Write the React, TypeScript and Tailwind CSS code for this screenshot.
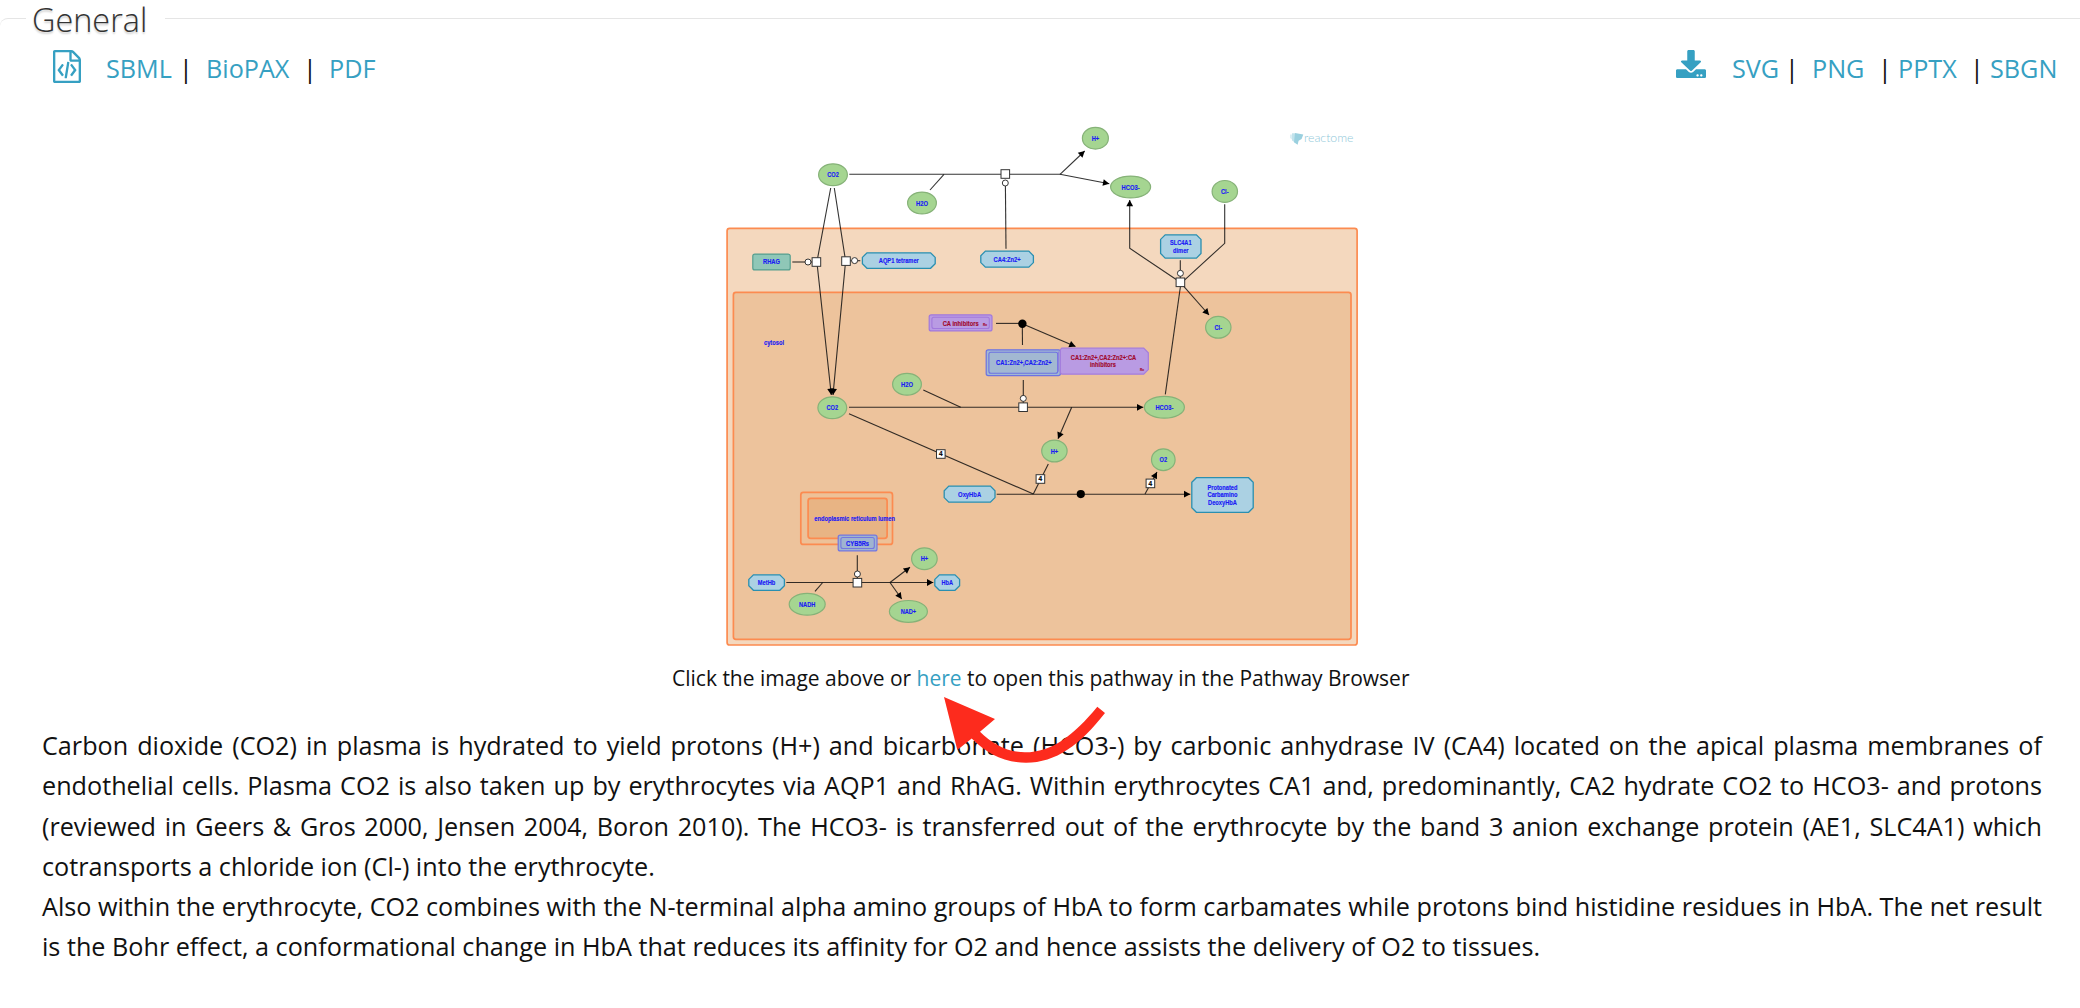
import React from 'react';

const INK = '#111111';
const BLUE = '#1a1af5';

type Pt = [number, number];

function Label({ x, y, w, children, fill = BLUE, size = 6.5 }: { x: number; y: number; w?: number; children: string; fill?: string; size?: number }) {
  return (
    <text
      x={x}
      y={y + size * 0.35}
      textAnchor="middle"
      fontSize={size}
      fontWeight={700}
      fill={fill}
      stroke={fill}
      strokeWidth={0.15}
      textLength={w}
      lengthAdjust="spacingAndGlyphs"
      fontFamily="'Liberation Sans', Arial, sans-serif"
    >
      {children}
    </text>
  );
}

function Molecule({ x, y, rx = 14.4, label, w }: { x: number; y: number; rx?: number; label: string; w: number }) {
  return (
    <g>
      <ellipse cx={x} cy={y} rx={rx} ry={10.9} fill="#a5d591" stroke="#86b278" strokeWidth={1.2} />
      <Label x={x} y={y + 0.3} w={w}>{label}</Label>
    </g>
  );
}

function octagon(x: number, y: number, w: number, h: number, c: number, cl = c) {
  return `M${x + cl} ${y}H${x + w - c}L${x + w} ${y + c}V${y + h - c}L${x + w - c} ${y + h}H${x + cl}L${x} ${y + h - cl}V${y + cl}Z`;
}

function Complex({ x, y, w, h, lines, tw }: { x: number; y: number; w: number; h: number; lines: string[]; tw: number[] }) {
  return (
    <g>
      <path d={octagon(x + 0.6, y + 0.6, w - 1.2, h - 1.2, 4.6)} fill="#abd1e3" stroke="#2a8fb0" strokeWidth={1.3} />
      {lines.map((t, i) => (
        <Label key={t} x={x + w / 2} y={y + h / 2 + 0.2 + (i - (lines.length - 1) / 2) * 7.2} w={tw[i]}>
          {t}
        </Label>
      ))}
    </g>
  );
}

function Node({ x, y, n }: { x: number; y: number; n?: string }) {
  return (
    <g>
      <rect x={x - 4.3} y={y - 4.3} width={8.6} height={8.6} fill="#fff" stroke="#333" strokeWidth={1} />
      {n && <Label x={x} y={y} fill="#000" size={6.5}>{n}</Label>}
    </g>
  );
}

function Catalyst({ x, y }: { x: number; y: number }) {
  return <circle cx={x} cy={y} r={3} fill="#fff" stroke="#222" strokeWidth={0.9} />;
}

function Line({ pts, arrow }: { pts: Pt[]; arrow?: boolean }) {
  const [tx, ty] = pts[pts.length - 1];
  const [px, py] = pts[pts.length - 2];
  const a = (Math.atan2(ty - py, tx - px) * 180) / Math.PI;
  return (
    <g>
      <polyline points={pts.map((p) => p.join(',')).join(' ')} fill="none" stroke={INK} strokeOpacity={0.85} strokeWidth={1.1} />
      {arrow && <path d="M0 0L-6.3 -3.4V3.4Z" fill="#000" transform={`translate(${tx} ${ty}) rotate(${a})`} />}
    </g>
  );
}

function Compartment({ x, y, w, h, fill }: { x: number; y: number; w: number; h: number; fill: string }) {
  return <rect x={x} y={y} width={w} height={h} rx={2.5} fill={fill} stroke="#fc8b50" strokeWidth={1.7} />;
}

function EntitySet({ x, y, w, h, fill, stroke }: { x: number; y: number; w: number; h: number; fill: string; stroke: string }) {
  return (
    <g fill={fill} stroke={stroke}>
      <rect x={x + 0.6} y={y + 0.6} width={w - 1.2} height={h - 1.2} rx={2} strokeWidth={1.2} />
      <rect x={x + 3.3} y={y + 3} width={w - 6.6} height={h - 6} rx={2} strokeWidth={1.1} />
    </g>
  );
}

function Pathway() {
  return (
    <svg className="block h-[540px] w-[640px]" viewBox="720 110 640 540" role="img" aria-label="Pathway diagram">
      <Compartment x={727.1} y={228.3} w={630} h={416.7} fill="#f4d8be" />
      <Compartment x={733.4} y={292.4} w={617.6} h={346.9} fill="#edc39c" />
      <Compartment x={800.8} y={492.4} w={91.7} h={52} fill="#edc198" />
      <Compartment x={808.1} y={498.4} w={79} h={39.9} fill="#e8b484" />

      <Line pts={[[849.3, 174.3], [1060, 174.3]]} />
      <Line pts={[[944, 174.3], [930, 190]]} />
      <Line pts={[[1060, 174.3], [1084.7, 151]]} arrow />
      <Line pts={[[1060, 174.3], [1109.3, 183.7]]} arrow />
      <Line pts={[[1005.4, 185], [1006, 248.7]]} />
      <Line pts={[[830.7, 188], [816.9, 262], [831.3, 395]]} arrow />
      <Line pts={[[834.3, 188], [845.6, 261], [833, 395]]} arrow />
      <Line pts={[[792.3, 262], [812, 262]]} />
      <Line pts={[[850, 260.7], [860.3, 260.7]]} />
      <Line pts={[[1180.3, 282.3], [1129.7, 248.3], [1129.7, 200]]} arrow />
      <Line pts={[[1224.7, 204.3], [1224.7, 243.3], [1182, 282.3]]} />
      <Line pts={[[1180.3, 260.3], [1180.3, 280]]} />
      <Line pts={[[1180.5, 286], [1165.3, 394.3]]} />
      <Line pts={[[1182, 284.3], [1209, 315]]} arrow />
      <Line pts={[[996, 323.4], [1022.3, 323.4]]} />
      <Line pts={[[1022.3, 323.7], [1022.5, 345]]} />
      <Line pts={[[1022.3, 323.7], [1075.5, 346.5]]} arrow />
      <Line pts={[[1023.3, 380], [1023.3, 405]]} />
      <Line pts={[[923.3, 390], [960.7, 407.3]]} />
      <Line pts={[[849, 407.3], [1143.3, 407.3]]} arrow />
      <Line pts={[[849, 413.7], [1033.3, 494]]} />
      <Line pts={[[1071.7, 407.3], [1058, 438.7]]} arrow />
      <Line pts={[[1048.3, 464], [1033.3, 494]]} />
      <Line pts={[[996.7, 494.2], [1190.3, 494.2]]} arrow />
      <Line pts={[[1145, 494], [1157, 472]]} arrow />
      <Line pts={[[857.3, 555.3], [857.3, 580]]} />
      <Line pts={[[786.3, 582.5], [933.3, 582.5]]} arrow />
      <Line pts={[[822.7, 582.5], [815, 591.3]]} />
      <Line pts={[[890, 582.5], [910, 567.3]]} arrow />
      <Line pts={[[890, 582.5], [901.7, 599]]} arrow />

      <Node x={1005.3} y={174} />
      <Catalyst x={1005.3} y={183} />
      <Node x={816.4} y={262} />
      <Catalyst x={808} y={262} />
      <Node x={846} y={261.1} />
      <Catalyst x={854.6} y={260.6} />
      <Node x={1180.4} y={282.3} />
      <Catalyst x={1180.4} y={273.3} />
      <Node x={1023.1} y={407.2} />
      <Catalyst x={1023.3} y={398.4} />
      <Node x={857.4} y={582.7} />
      <Catalyst x={857.4} y={574} />
      <Node x={940.8} y={454} n="4" />
      <Node x={1040.4} y={479} n="4" />
      <Node x={1150.4} y={483.4} n="4" />
      <circle cx={1022.4} cy={323.8} r={4.2} fill="#000" />
      <circle cx={1080.8} cy={494.1} r={4.1} fill="#000" />

      <Molecule x={833} y={174.7} label="CO2" w={11.5} />
      <Molecule x={922} y={203} label="H2O" w={12} />
      <Molecule x={1095.4} y={138.2} rx={13} label="H+" w={7.5} />
      <Molecule x={1130.6} y={187} rx={20} label="HCO3-" w={18} />
      <Molecule x={1224.8} y={191.4} rx={12.7} label="Cl-" w={7.5} />
      <Molecule x={1218.3} y={327.3} rx={12.7} label="Cl-" w={7.5} />
      <Molecule x={907} y={384.3} label="H2O" w={12} />
      <Molecule x={832.3} y={407.7} label="CO2" w={11.5} />
      <Molecule x={1164.4} y={407.3} rx={20} label="HCO3-" w={18} />
      <Molecule x={1054.4} y={451} rx={12.7} label="H+" w={7.5} />
      <Molecule x={1163.3} y={459.7} rx={11.8} label="O2" w={7.5} />
      <Molecule x={924.4} y={558.7} rx={12.8} label="H+" w={7.5} />
      <Molecule x={807.2} y={604.3} rx={18} label="NADH" w={16.5} />
      <Molecule x={908.4} y={611.4} rx={19} label="NAD+" w={15.5} />

      <rect x={752.8} y={254.1} width={37.4} height={15.8} rx={2} fill="#8fc7b7" stroke="#559e8e" strokeWidth={1.2} />
      <Label x={771.5} y={262.2} w={17}>RHAG</Label>
      <Complex x={861.8} y={252.2} w={74} h={16.7} lines={['AQP1 tetramer']} tw={[40]} />
      <Complex x={980.2} y={250.5} w={53.8} h={17.3} lines={['CA4:Zn2+']} tw={[27]} />
      <Complex x={1160} y={234.2} w={41.6} h={24.5} lines={['SLC4A1', 'dimer']} tw={[21.5, 15.5]} />
      <Complex x={943.6} y={485.5} w={52} h={17.3} lines={['OxyHbA']} tw={[23]} />
      <Complex x={1191.2} y={477.1} w={62.6} h={35.8} lines={['Protonated', 'Carbamino', 'DeoxyHbA']} tw={[30, 30, 29]} />
      <Complex x={748.2} y={574.2} w={36.8} h={16.7} lines={['MetHb']} tw={[17.5]} />
      <Complex x={934.2} y={574.2} w={26} h={16.7} lines={['HbA']} tw={[11.5]} />

      <EntitySet x={928.6} y={314.2} w={64} h={17.3} fill="#b99be3" stroke="#a279dc" />
      <Label x={960.7} y={323.4} w={36} fill="#a0082c">CA inhibitors</Label>
      <Label x={985} y={324.4} w={4} fill="#a0082c" size={3.5}>Rx</Label>
      <EntitySet x={985.6} y={349.2} w={75.4} h={27} fill="#a2b8d2" stroke="#6c72e2" />
      <Label x={1023.8} y={362.7} w={55.5}>CA1:Zn2+,CA2:Zn2+</Label>
      <path d={octagon(1060.3, 348.2, 88, 26, 4.6, 1.5)} fill="#b99be3" stroke="#a57ddd" strokeWidth={1.2} />
      <path d="M1058.3 351.5V371.5" stroke="#8f76e0" strokeWidth={1} />
      <Label x={1103.5} y={357.7} w={65.5} fill="#a0082c">CA1:Zn2+,CA2:Zn2+:CA</Label>
      <Label x={1103} y={365} w={26} fill="#a0082c">inhibitors</Label>
      <Label x={1142} y={369.4} w={4} fill="#a0082c" size={3.5}>Rx</Label>
      <EntitySet x={837.6} y={534.5} w={40} h={17} fill="#9fb4d0" stroke="#7477e0" />
      <Label x={857.6} y={543.3} w={23}>CYB5Rs</Label>

      <Label x={774} y={342.7} w={20}>cytosol</Label>
      <Label x={854.7} y={519} w={80.7}>endoplasmic reticulum lumen</Label>

      <g fill="#9ad0df">
        <path d="M1295 133L1303.3 134.6L1301.6 139L1298.6 140.7L1297.6 144.8L1294 142.2Z" />
        <path d="M1292 133.2H1295V142.4L1292 140.6Z" opacity={0.6} />
        <path d="M1290 134.5H1292V139.4L1290 138Z" opacity={0.35} />
      </g>
      <text x={1304} y={142.3} fontSize={12.5} fontWeight={300} fontFamily="Lato, sans-serif" fill="#90c8d9" textLength={49.5} lengthAdjust="spacingAndGlyphs">
        reactome
      </text>
    </svg>
  );
}

function FileCodeIcon() {
  return (
    <svg className="h-[33px] w-7 fill-[#36a0c2]" viewBox="0 0 1536 1792" preserveAspectRatio="none" aria-hidden="true">
      <path d="M1468 380q28 28 48 76t20 88v1152q0 40-28 68t-68 28H96q-40 0-68-28t-28-68V96q0-40 28-68T96 0h896q40 0 88 20t76 48zm-444-244v376h376q-10-29-22-41l-313-313q-12-12-41-22zm384 1528V640H992q-40 0-68-28t-28-68V128H128v1536h1280zM480 768q8-11 21-12.5t24 6.5l51 38q11 8 12.5 21t-6.5 24l-182 243 182 243q8 11 6.5 24t-12.5 21l-51 38q-11 8-24 6.5t-21-12.5l-226-301q-14-19 0-38zm802 301q14 19 0 38l-226 301q-8 11-21 12.5t-24-6.5l-51-38q-11-8-12.5-21t6.5-24l182-243-182-243q-8-11-6.5-24t12.5-21l51-38q11-8 24-6.5t21 12.5zm-620 461q-13-2-20.5-13t-5.5-24l138-831q2-13 13-20.5t24-5.5l63 10q13 2 20.5 13t5.5 24l-138 831q-2 13-13 20.5t-24 5.5z" />
    </svg>
  );
}

function DownloadIcon() {
  return (
    <svg className="h-7 w-[30px] fill-[#36a0c2]" viewBox="0 0 512 512" preserveAspectRatio="none" aria-hidden="true">
      <path d="M216 0h80c13.3 0 24 10.7 24 24v168h87.700c17.800 0 26.700 21.500 14.100 34.100L269.700 378.300c-7.500 7.500-19.800 7.500-27.300 0L90.100 226.100c-12.600-12.600-3.700-34.100 14.100-34.100H192V24c0-13.300 10.700-24 24-24zm296 376v112c0 13.300-10.700 24-24 24H24c-13.300 0-24-10.700-24-24V376c0-13.300 10.700-24 24-24h146.700l49 49c20.100 20.100 52.500 20.100 72.600 0l49-49H488c13.300 0 24 10.700 24 24zm-124 88c0-11-9-20-20-20s-20 9-20 20 9 20 20 20 20-9 20-20zm64 0c0-11-9-20-20-20s-20 9-20 20 9 20 20 20 20-9 20-20z" />
    </svg>
  );
}

const link = 'text-[#36a0c2]';

function RedArrow() {
  return (
    <svg className="pointer-events-none absolute top-[696px] left-[942px] h-[70px] w-[166px]" viewBox="942 696 166 70" aria-hidden="true">
      <path
        d="M944 697L995 719L980 731.7C992 744 1008 752.3 1025 752.3C1052 752.3 1074 735 1097.300 706.700L1105 713C1080 745 1056 762.700 1026 762.700C1004 762.700 986 753 971.700 738.500L957.300 750Z"
        fill="#fd2b1d"
      />
    </svg>
  );
}

export default function App() {
  return (
    <main className="relative h-[1008px] w-[2080px] overflow-hidden bg-white font-['Open_Sans',sans-serif] text-[#111]">
      <header className="flex h-[38px] items-start">
        <div className="mt-[18px] h-2 w-[26px] rounded-tl-lg border-t border-[#e5e5e5]" />
        <h1 className="w-[139px] pl-[6px] text-[32.4px] leading-[38px] font-light whitespace-nowrap text-[#333] [text-shadow:0_2px_2px_rgba(0,0,0,0.2)]">General</h1>
        <div className="mt-[18px] flex-1 border-t border-[#e5e5e5]" />
      </header>

      <nav className="flex h-[60px] items-start justify-between text-[25.2px] leading-[60px]">
        <div className="flex pl-[53px]">
          <div className="w-[53px] pt-3"><FileCodeIcon /></div>
          <a className={`w-[73px] ${link}`}>SBML</a>
          <span className="w-[27px]">|</span>
          <a className={`w-[97px] ${link}`}>BioPAX</a>
          <span className="w-[26px]">|</span>
          <a className={link}>PDF</a>
        </div>
        <div className="flex">
          <div className="w-14 pt-3"><DownloadIcon /></div>
          <a className={`w-[53px] ${link}`}>SVG</a>
          <span className="w-[27px]">|</span>
          <a className={`w-[66px] ${link}`}>PNG</a>
          <span className="w-5">|</span>
          <a className={`w-[72px] ${link}`}>PPTX</a>
          <span className="w-5">|</span>
          <a className={`w-[90px] ${link}`}>SBGN</a>
        </div>
      </nav>

      <figure className="mt-3">
        <div className="ml-[720px]"><Pathway /></div>
        <figcaption className="ml-[672px] text-[21px] leading-[56px] whitespace-nowrap">
          Click the image above or <a className={link}>here</a> to open this pathway in the Pathway Browser
        </figcaption>
      </figure>

      <section className="mt-[19px] ml-[42px] w-[2000px] text-justify text-[25.2px] leading-[40.3px]">
        <p>
          Carbon dioxide (CO2) in plasma is hydrated to yield protons (H+) and bicarbonate (HCO3-) by carbonic anhydrase IV (CA4) located on the apical plasma membranes of endothelial cells. Plasma CO2 is also taken up by erythrocytes via AQP1 and RhAG. Within erythrocytes CA1 and, predominantly, CA2 hydrate CO2 to HCO3- and protons (reviewed in Geers &amp; Gros 2000, Jensen 2004, Boron 2010). The HCO3- is transferred out of the erythrocyte by the band 3 anion exchange protein (AE1, SLC4A1) which cotransports a chloride ion (Cl-) into the erythrocyte.
        </p>
        <p>
          Also within the erythrocyte, CO2 combines with the N-terminal alpha amino groups of HbA to form carbamates while protons bind histidine residues in HbA. The net result is the Bohr effect, a conformational change in HbA that reduces its affinity for O2 and hence assists the delivery of O2 to tissues.
        </p>
      </section>
      <RedArrow />
    </main>
  );
}
